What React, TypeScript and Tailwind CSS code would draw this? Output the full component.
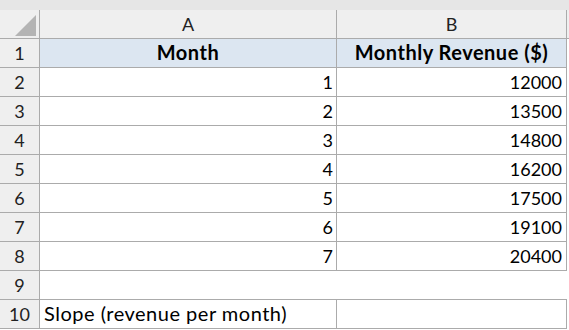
const rows: { n: number; a: string; b: string }[] = [
  { n: 2, a: "1", b: "12000" },
  { n: 3, a: "2", b: "13500" },
  { n: 4, a: "3", b: "14800" },
  { n: 5, a: "4", b: "16200" },
  { n: 6, a: "5", b: "17500" },
  { n: 7, a: "6", b: "19100" },
  { n: 8, a: "7", b: "20400" },
];

const RowHead = ({ n }: { n: number }) => (
  <div className="w-[40px] h-full shrink-0 flex items-end justify-center pb-[5px] bg-[#efefef] border-r border-b border-[#ababab] text-[#222]">
    {n}
  </div>
);

export default function App() {
  return (
    <div
      className="w-[569px] h-[330px] overflow-hidden bg-white text-black text-[18px] leading-none"
      style={{ fontFamily: "Lato, 'Noto Sans', sans-serif" }}
    >
      <div className="h-[10px] bg-[#e6e6e6]" />

      {/* column headers */}
      <div className="flex h-[29px] bg-[#efefef] text-[#222]">
        <div className="w-[40px] shrink-0 border-r border-b border-[#ababab] flex items-end justify-end pr-[3px] pb-[2px]">
          <svg width="21" height="21" viewBox="0 0 21 21">
            <polygon points="21,0 21,21 0,21" fill="#b4b4b4" />
          </svg>
        </div>
        <div className="w-[297px] shrink-0 border-r border-b border-[#ababab] flex items-end justify-center pb-[5px]">
          A
        </div>
        <div className="w-[230px] shrink-0 border-r border-b border-[#ababab] flex items-end justify-center pb-[5px]">
          B
        </div>
        <div className="flex-1 border-b border-[#ababab]" />
      </div>

      {/* row 1 */}
      <div className="flex h-[29px]">
        <RowHead n={1} />
        <div className="w-[297px] shrink-0 bg-[#dce6f1] border-r border-b border-[#ababab] flex items-end justify-center pb-[5px] font-bold text-[20px] tracking-[0.5px]">
          Month
        </div>
        <div className="w-[230px] shrink-0 bg-[#dce6f1] border-r border-b border-[#ababab] flex items-end justify-center pb-[5px] font-bold text-[20px] tracking-[0.5px]">
          Monthly Revenue ($)
        </div>
      </div>

      {rows.map((r) => (
        <div key={r.n} className="flex h-[29px]">
          <RowHead n={r.n} />
          <div className="w-[297px] shrink-0 border-r border-b border-[#ababab] flex items-end justify-end pr-[3px] pb-[5px]">
            {r.a}
          </div>
          <div className="w-[230px] shrink-0 border-r border-b border-[#ababab] flex items-end justify-end pr-[4px] pb-[5px]">
            {r.b}
          </div>
        </div>
      ))}

      {/* row 9 */}
      <div className="flex h-[29px]">
        <RowHead n={9} />
        <div className="flex-1" />
      </div>

      {/* row 10 */}
      <div className="flex h-[29px]">
        <RowHead n={10} />
        <div className="w-[297px] shrink-0 border-t border-r border-b border-[#ababab] -mt-px flex items-end pl-[4px] pb-[5px] text-[20px] tracking-[0.5px]">
          Slope (revenue per month)
        </div>
        <div className="w-[230px] shrink-0 border-t border-r border-b border-[#ababab] -mt-px" />
      </div>
    </div>
  );
}
